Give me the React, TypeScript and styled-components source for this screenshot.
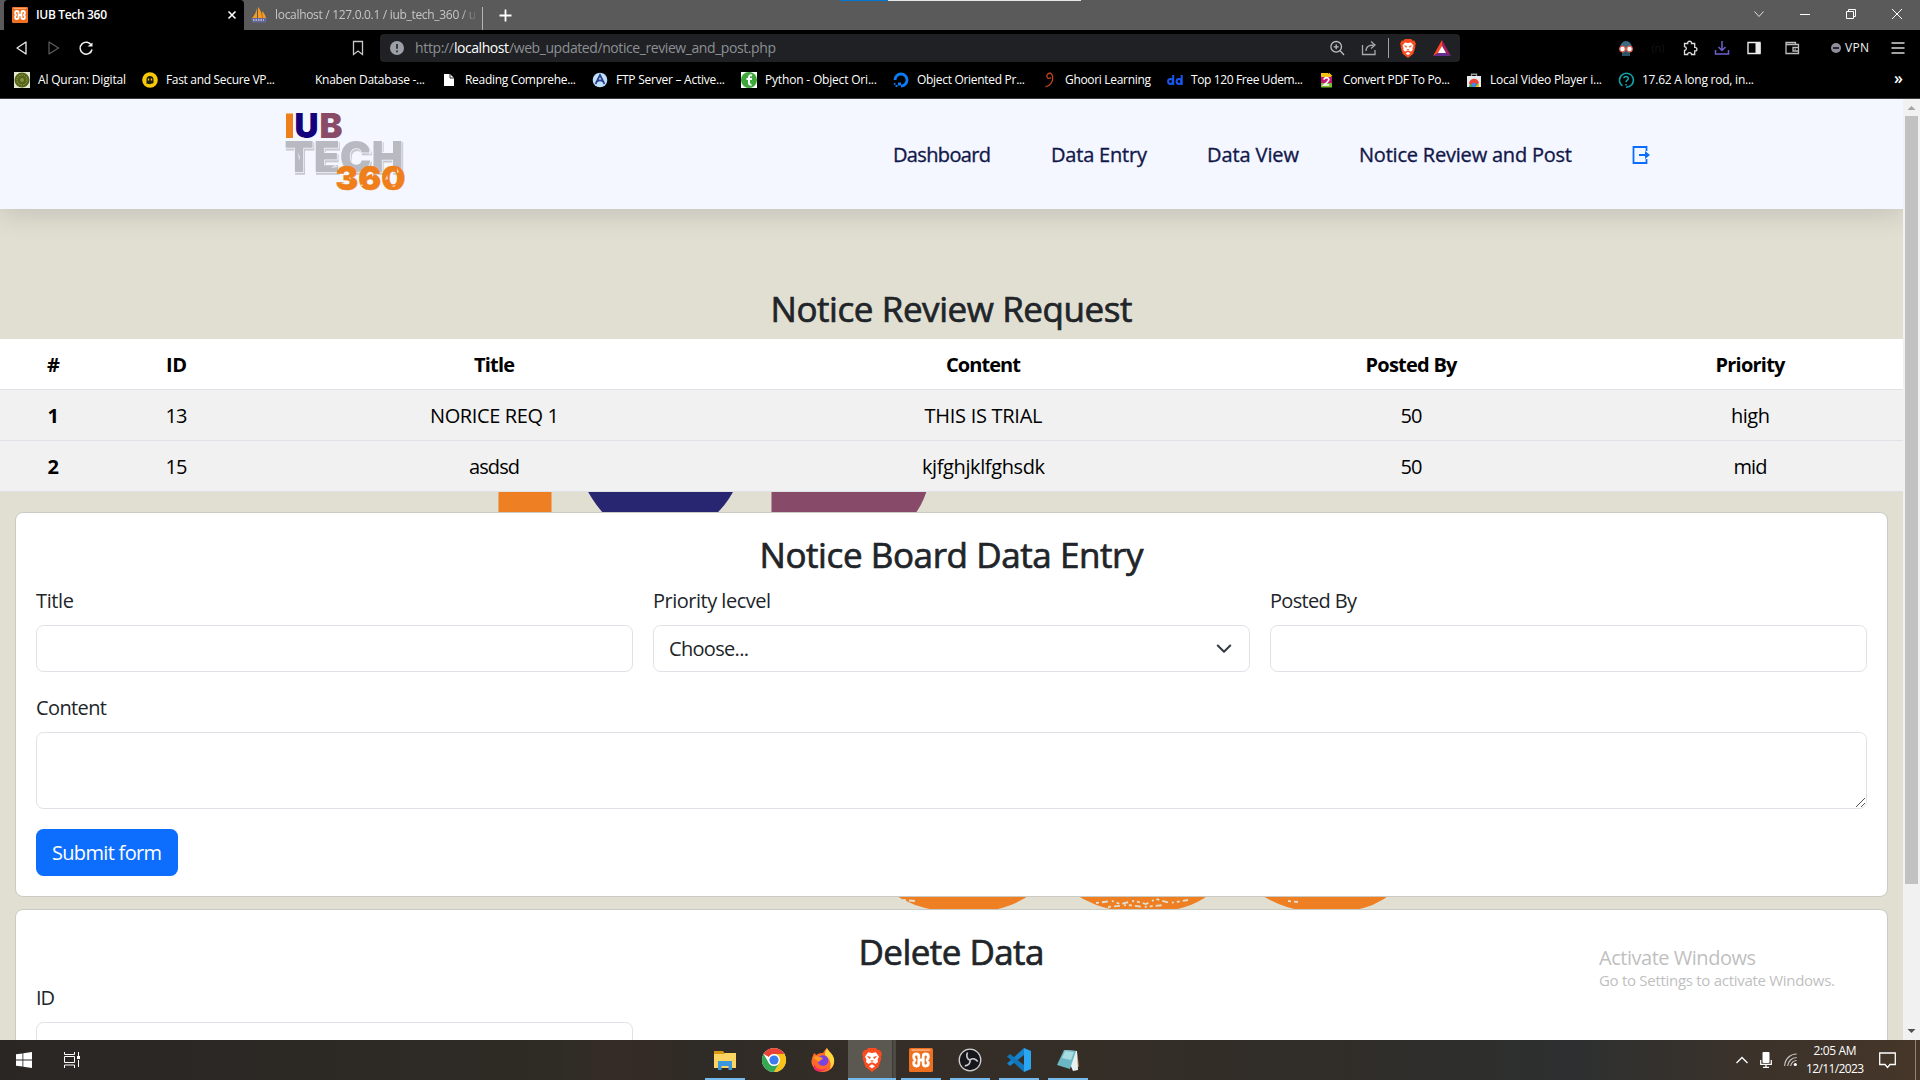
import React, { useLayoutEffect, useRef, useState } from "react";
import styled, { createGlobalStyle } from "styled-components";

const GlobalStyle = createGlobalStyle`
  *, *::before, *::after { box-sizing: border-box; }
  html, body { margin: 0; padding: 0; overflow: hidden; background: #000; }
  body { font-family: "Segoe UI", "Open Sans", "Noto Sans", sans-serif; font-size: 20px; line-height: 1.5; color: #212529; }
  svg { display: block; flex: none; overflow: visible; }
`;

/* ---------- text set to a fixed measure ---------- */

const Measure = styled.span<{ $w: number }>`
  display: inline-block;
  flex: none;
  width: ${(p) => p.$w}px;
  white-space: nowrap;
  text-align: left;
`;

function Fit({ w, children }: { w: number; children: string }) {
  const ref = useRef<HTMLSpanElement>(null);
  const [spacing, setSpacing] = useState(0);
  const text = children;
  useLayoutEffect(() => {
    if (!ref.current) return;
    const natural = ref.current.getBoundingClientRect().width - spacing * text.length;
    setSpacing((w - natural) / Math.max(1, text.length - 1));
  }, [w, text]);
  return (
    <Measure $w={w}>
      <span ref={ref} style={{ letterSpacing: `${spacing}px` }}>
        {text}
      </span>
    </Measure>
  );
}

/* ---------- shell ---------- */

const Screen = styled.div`
  width: 1920px;
  height: 1080px;
  display: flex;
  flex-direction: column;
  overflow: hidden;
  background: #000;
`;

/* ---------- browser chrome ---------- */

const TabStrip = styled.div`
  flex: none;
  height: 30px;
  padding-left: 4px;
  display: flex;
  background: #5a5a5a;
  color: #d0d0d0;
  font-size: 12px;
  line-height: 16px;
  position: relative;
`;

const LoadLine = styled.div`
  position: absolute;
  top: 0;
  left: 840px;
  width: 241px;
  height: 1px;
  background: linear-gradient(90deg, #0078d7 48px, #e6e6e6 48px);
`;

const Tab = styled.div<{ $active?: boolean }>`
  width: ${(p) => (p.$active ? 240 : 238)}px;
  height: 30px;
  padding: 0 5px 0 ${(p) => (p.$active ? 8 : 7)}px;
  display: flex;
  align-items: center;
  gap: 8px;
  border-radius: 4px 4px 0 0;
  background: ${(p) => (p.$active ? "#000" : "transparent")};
  color: ${(p) => (p.$active ? "#fff" : "#c6c6c6")};
  font-weight: ${(p) => (p.$active ? 600 : 400)};
`;

const FadingTitle = styled.div`
  width: 204px;
  overflow: hidden;
  -webkit-mask-image: linear-gradient(90deg, #000 185px, transparent 204px);
  mask-image: linear-gradient(90deg, #000 185px, transparent 204px);
`;

const TabDivider = styled.div`
  width: 1px;
  height: 23px;
  margin-top: 7px;
  background: #b4b4b4;
`;

const Spacer = styled.div`
  flex: 1;
`;

const NewTab = styled.div`
  padding: 9px 16px 0 16px;
`;

const WindowButtons = styled.div`
  display: flex;
  gap: 30px;
  padding: 10px 15px 0 0;
`;

const ToolBar = styled.div`
  flex: none;
  height: 36px;
  display: flex;
  align-items: center;
  background: #000;
`;

const NavButtons = styled.div`
  flex: none;
  width: 380px;
  display: flex;
  align-items: center;
  padding: 0 14px 0 14px;
  gap: 16px;
`;

const AddressBar = styled.div`
  flex: none;
  width: 1080px;
  height: 28px;
  border-radius: 4px;
  background: #202124;
  display: flex;
  align-items: center;
  padding: 0 4px 0 10px;
  font-size: 14px;
  line-height: 20px;
  color: #8c9095;
`;

const Info = styled.div`
  width: 25px;
`;

const Host = styled.span`
  color: #fff;
`;

const AddressActions = styled.div`
  display: flex;
  align-items: center;
  gap: 11px;
`;

const ZoomSlot = styled.div`
  margin-right: 5px;
`;

const Bar = styled.i`
  width: 1px;
  height: 20px;
  background: #a0a0a0;
`;

const Extensions = styled.div`
  flex: 1;
  display: flex;
  align-items: center;
  padding: 0 14px 0 158px;
  gap: 16px;
`;

const Faint = styled.span`
  width: 16px;
  text-align: center;
  color: #151515;
  font-size: 11px;
`;

const WalletSlot = styled.div`
  margin-left: 6px;
`;

const Vpn = styled.div`
  display: flex;
  align-items: center;
  gap: 4px;
  margin: 0 5px 0 15px;
  color: #f0f0f0;
  font-size: 12px;
  line-height: 16px;
`;

const VpnDot = styled.i`
  width: 10px;
  height: 10px;
  border-radius: 50%;
  background: linear-gradient(90deg, #8e8e9c 2px, transparent 2px, transparent 8px, #8e8e9c 8px),
    linear-gradient(#8e8e9c 4px, #26262c 4px, #26262c 6px, #8e8e9c 6px);
`;

const BookmarkBar = styled.div`
  flex: none;
  height: 33px;
  padding: 0 17px 5px 14px;
  display: flex;
  align-items: center;
  gap: 16px;
  background: #000;
  border-bottom: 1px solid #3a3a3c;
  color: #fff;
  font-size: 12px;
  line-height: 16px;
`;

const Bookmark = styled.div`
  display: flex;
  align-items: center;
  gap: 8px;
`;

const More = styled.span`
  margin-left: auto;
  font-size: 16px;
  font-weight: 600;
  line-height: 14px;
  padding-bottom: 3px;
`;

/* ---------- page ---------- */

const Viewport = styled.div`
  flex: none;
  height: 941px;
  display: flex;
`;

const Page = styled.div`
  width: 1903px;
  height: 941px;
  position: relative;
  overflow: hidden;
  background: #e1dfd2;
`;

const Backdrop = styled.svg`
  position: absolute;
  left: 0;
  top: 0;
`;

const Flow = styled.div`
  position: relative;
  display: flex;
  flex-direction: column;
`;

const Navbar = styled.nav`
  height: 110px;
  padding: 12px 253px 0 280px;
  display: flex;
  justify-content: space-between;
  background: #f4f7ff;
  box-shadow: 0 6px 26px rgba(0, 0, 0, 0.13);
`;

const Menu = styled.div`
  height: 88px;
  display: flex;
  align-items: center;
  gap: 60px;
  color: #12174a;
  -webkit-text-stroke: 0.35px #12174a;
`;

const TechWord = styled.text`
  filter: drop-shadow(1.5px 2px 0 #c6c8ce);
  paint-order: stroke;
`;

const Heading = styled.h3<{ $first?: boolean }>`
  height: 42px;
  margin: ${(p) => (p.$first ? "78px 0 10px" : "0 0 10px")};
  padding-top: 1px;
  font-size: 35px;
  line-height: 42px;
  font-weight: 400;
  -webkit-text-stroke: 0.7px #212529;
  text-align: center;
`;

const Table = styled.table`
  width: 1903px;
  border-collapse: separate;
  border-spacing: 0;
  table-layout: fixed;
  text-align: center;
  color: #000;
`;

const Column = styled.col<{ $w: number }>`
  width: ${(p) => p.$w}px;
`;

const Row = styled.tr<{ $head?: boolean }>`
  background: ${(p) => (p.$head ? "#fff" : "#f1f1f1")};

  th, td {
    height: 51px;
    padding: 11px 0 9px;
    border-bottom: 1px solid #dee2e6;
    line-height: 30px;
    vertical-align: top;
  }
`;

const Th = styled.th`
  font-weight: 700;
`;

const Td = styled.td`
  font-weight: 400;
`;

const Card = styled.section<{ $gap: number; $h: number }>`
  height: ${(p) => p.$h}px;
  margin: ${(p) => p.$gap}px 15px 0;
  padding: 20px;
  border: 1px solid #cbcbc6;
  border-radius: 8px;
  background: #fff;
`;

const Grid = styled.div`
  display: grid;
  grid-template-columns: repeat(3, 1fr);
  gap: 20px;
`;

const Field = styled.div<{ $wide?: boolean }>`
  grid-column: ${(p) => (p.$wide ? "1 / -1" : "auto")};
  display: flex;
  flex-direction: column;
  line-height: 30px;
`;

const Label = styled.label`
  height: 40px;
  padding-top: 1px;
`;

const Control = styled.div<{ $tall?: boolean }>`
  height: ${(p) => (p.$tall ? 77 : 47)}px;
  padding: 0 15px;
  display: flex;
  align-items: ${(p) => (p.$tall ? "flex-end" : "center")};
  justify-content: space-between;
  border: 1px solid #dee2e6;
  border-radius: 7.5px;
  background: #fff;
`;

const Grip = styled.svg`
  margin: 0 -16px -1px auto;
`;

const Submit = styled.button`
  width: 142px;
  height: 47px;
  padding: 1px 0 0;
  margin-top: 20px;
  border: 0;
  border-radius: 7.5px;
  background: #0d6efd;
  color: #fff;
  font: inherit;
  line-height: 30px;
  display: flex;
  align-items: center;
  justify-content: center;
`;

const Watermark = styled.div`
  position: absolute;
  left: 1599px;
  top: 845px;
  display: flex;
  flex-direction: column;
  color: #bfbfbf;
  font-size: 20px;
  line-height: 28px;
`;

const Small = styled.span`
  font-size: 15px;
  line-height: 17px;
`;

const Scrollbar = styled.div`
  width: 17px;
  height: 941px;
  display: flex;
  flex-direction: column;
  align-items: center;
  background: #f1f1f1;
`;

const Thumb = styled.div`
  width: 13px;
  height: 768px;
  margin-bottom: auto;
  background: #c1c1c1;
`;

/* ---------- taskbar ---------- */

const Taskbar = styled.footer`
  flex: none;
  height: 40px;
  display: flex;
  align-items: stretch;
  background: linear-gradient(90deg, #292624 0, #2c2925 300px, #2f2c26 560px, #362b26 620px, #2f2b26 700px, #352d27 900px, #352e27 1100px, #302d29 1350px, #2d3030 1570px, #3b322a 1750px, #463629 1920px);
`;

const Start = styled.div`
  width: 705px;
  display: flex;
  align-items: center;
  gap: 32px;
  padding-left: 16px;
`;

const Task = styled.div<{ $ml?: number; $w?: number; $active?: boolean; $open?: boolean }>`
  width: ${(p) => p.$w ?? 40}px;
  margin-left: ${(p) => p.$ml ?? 9}px;
  display: flex;
  align-items: center;
  justify-content: center;
  background: ${(p) => (p.$active ? "linear-gradient(90deg, #5b5751 44px, #3d3a35 44px, #3d3a35 45px, #4d4a45 45px)" : "transparent")};
  border-bottom: 2px solid ${(p) => (p.$open ? "#76b9ed" : "transparent")};
  padding-top: 2px;
`;

const Tray = styled.div`
  margin-left: auto;
  display: flex;
  align-items: center;
  gap: 12px;
  color: #fff;
`;

const Clock = styled.div`
  width: 60px;
  margin: 0 2px 0 -5px;
  display: flex;
  flex-direction: column;
  align-items: center;
  font-size: 12px;
  line-height: 18px;
`;

const Peek = styled.i`
  width: 1px;
  height: 40px;
  margin: 0 4px 0 7px;
  background: #8c857e;
`;

/* ---------- drawings ---------- */

const Xampp = ({ size }: { size: number }) => (
  <svg width={size} height={size} viewBox="0 0 24 24">
    <rect width="24" height="24" rx="1.500" fill="#ee6f20" />
    <rect x="2.500" y="1.200" width="19" height="1.800" fill="#f9a974" />
    <g fill="none" stroke="#fff" strokeWidth="2.800" strokeLinejoin="round" strokeLinecap="round">
      <path d="M9.800 9.500V8.300Q9.800 6 7.300 6 4.700 6 4.700 8.700q0 2 1.300 3.300-1.300 1.300-1.300 3.300 0 2.700 2.600 2.700 2.500 0 2.500-2.300V12h4.400v3.700q0 2.300 2.500 2.300 2.600 0 2.600-2.700 0-2-1.300-3.300 1.300-1.300 1.300-3.300Q19.300 6 16.700 6q-2.500 0-2.500 2.300V12" />
    </g>
  </svg>
);

const BraveLion = ({ w, h }: { w: number; h: number }) => (
  <svg width={w} height={h} viewBox="0 0 20 24">
    <path d="M6 0h8l2 2.300 2-.3 2 4-1 2.500.3 2L16.500 19 10 24l-6.500-5L.7 10.500l.3-2L0 6l2-4 2 .3z" fill="#fb4c1f" />
    <path d="M6.200 4.300l3.800.8 3.800-.8 3.200 4.200-1.400 3 .4 2.500-2.600 2-2-1.300L10 14.300l-1.400.4-2 1.300L4 14l.4-2.500L3 8.500zM7 18.300l3-2.100 3 2.100-3 2.300z" fill="#fff" />
    <path d="M5.300 8.300l3.200.9-.8 1.600zM14.700 8.300l-3.200.9.8 1.600zM8.300 12.600l1.700.9 1.700-.9" fill="#fb4c1f" stroke="#fb4c1f" strokeWidth=".5" />
  </svg>
);

const Logo = () => (
  <svg width="130" height="88" viewBox="280 111 130 88" fontFamily="Inter, sans-serif" fontWeight="900">
    <rect x="286" y="113.500" width="7" height="24.500" fill="#ee7f1b" />
    <text x="294.500" y="138.300" fontSize="34.500" textLength="24" lengthAdjust="spacingAndGlyphs" fill="#13007c">U</text>
    <text x="319.500" y="138.300" fontSize="34.500" textLength="23" lengthAdjust="spacingAndGlyphs" fill="#8a4b68">B</text>
    <TechWord x="284.500" y="172" fontSize="42" textLength="119" lengthAdjust="spacingAndGlyphs" fill="#b9bac1" stroke="#f4f7ff" strokeWidth="1.400">TECH</TechWord>
    <text x="335.500" y="189.500" fontSize="33" textLength="70" lengthAdjust="spacingAndGlyphs" fill="#ee7f1b" stroke="#ee7f1b" strokeWidth=".5">360</text>
    <g fill="#f4f7ff" opacity=".7">
      <path d="M298 152l2 5-1 4zM331 168l4-3 3 2zM369 149l2 4-2 3zM349 177l2 1-1 2zM341 184l3-2 2 2zM372 172l2 3-2 2zM385 180l2-5 1 4zM397 168l2 4-2 1zM360 186l2-2 1 2zM391 186l5-1-2 2z" />
    </g>
  </svg>
);

const Svg16 = ({ children, s = 16 }: { children?: React.ReactNode; s?: number }) => (
  <svg width={s} height={s} viewBox="0 0 16 16" fill="none">
    {children}
  </svg>
);

const BatSlot = styled.div`
  margin-left: 12px;
`;

const bookmarks: { label: string; w: number; icon: React.ReactNode }[] = [
  {
    label: "Al Quran: Digital", w: 88,
    icon: <Svg16><rect width="16" height="16" fill="#e6e9cf" /><circle cx="8" cy="8" r="7.500" fill="#53641c" /><circle cx="8" cy="8" r="5" stroke="#a3a445" strokeDasharray="1.500 1" /><circle cx="8" cy="8" r="2" fill="#8b9137" /></Svg16>,
  },
  {
    label: "Fast and Secure VP...", w: 109,
    icon: <Svg16><circle cx="8" cy="8" r="7.800" fill="#f9c908" /><path d="M4.500 12V7.500a3.500 3.500 0 017 0V11c-1.500 1-2 .2-3 1-1 .8-2.500-.8-4 0z" fill="#1d1d12" /><path d="M6.500 6.500v2M9.500 6.500v2" stroke="#f9c908" strokeWidth="1.300" /></Svg16>,
  },
  { label: "Knaben Database -...", w: 110, icon: <Svg16 /> },
  {
    label: "Reading Comprehe...", w: 111,
    icon: <Svg16><path d="M3 2h6l4 4v8H3z" fill="#fff" /><path d="M9 2v4h4" stroke="#000" strokeWidth=".8" /></Svg16>,
  },
  {
    label: "FTP Server – Active...", w: 109,
    icon: <Svg16><circle cx="8" cy="8" r="7.300" fill="#bfe0fa" /><path d="M3.500 12L8 3l4.500 9M5 9.500c2-1.500 4-1.500 6 0" stroke="#27408f" strokeWidth="1.700" /></Svg16>,
  },
  {
    label: "Python - Object Ori...", w: 112,
    icon: <Svg16><rect width="16" height="16" fill="#fff" /><circle cx="8" cy="8" r="8" fill="#3fa63c" /><path d="M11 3.500c-2-.8-3 .2-3 2V11c0 1.500 1 2 2.500 1.500M5.500 7H11" stroke="#fff" strokeWidth="2" /></Svg16>,
  },
  {
    label: "Object Oriented Pr...", w: 108,
    icon: <Svg16><path d="M8 14a6 6 0 10-6-6" stroke="#0a7cf5" strokeWidth="2.900" /><path d="M5 10.500h3v3H5zM2.500 13h2v2h-2zM.8 11h1.700v1.700H.8z" fill="#0a7cf5" /></Svg16>,
  },
  {
    label: "Ghoori Learning", w: 86,
    icon: <Svg16><path d="M9.500 1c-3 .5-4 2-3.500 4 .5 1.500 2.500 2 4 .500M9.500 1c2.500 2 3 6 1 9.500-1.500 2.500-3.500 4-6 4" stroke="#c3451f" strokeWidth="1.300" /></Svg16>,
  },
  {
    label: "Top 120 Free Udem...", w: 112,
    icon: <Svg16><g stroke="#1757f0" strokeWidth="2"><circle cx="3.500" cy="9.500" r="2.400" /><path d="M6.200 3v10M14.700 3v10" /><circle cx="12" cy="9.500" r="2.400" /></g></Svg16>,
  },
  {
    label: "Convert PDF To Po...", w: 107,
    icon: <Svg16><path d="M2 1h7l4 4v5H2z" fill="#f2c312" /><path d="M10 .5l3.500 3.500H10z" fill="#f2c312" /><path d="M2 5h11v6H2z" fill="#c41675" /><path d="M2 11h11v4.500H2z" fill="#7bb932" /><path d="M5 7.700q.4-2 2.500-2t2.400 1.800Q9.900 9 5 13h5.300" stroke="#fff" strokeWidth="1.700" /></Svg16>,
  },
  {
    label: "Local Video Player i...", w: 112,
    icon: <Svg16><path d="M5.500 4V2.200h5V4" stroke="#9a9da1" strokeWidth="1.400" /><path d="M1 4h14v11H1z" fill="#e9eaeb" /><path d="M3 15a5 5 0 0110 0z" fill="#35a853" /><path d="M3 12a5 5 0 0110-.5l-5 1z" fill="#e94435" /><path d="M13 11.500V15H9z" fill="#fbbc05" /><circle cx="8" cy="13" r="2.200" fill="#4285f4" /></Svg16>,
  },
  {
    label: "17.62 A long rod, in...", w: 112,
    icon: <Svg16><path d="M4.500 14A7 7 0 118 15.200" stroke="#12a3ab" strokeWidth="1.500" /><path d="M5.800 6.200C6 4 10.500 4 10.300 6.500 10.200 8.300 8 8 8 10.300M8 12v1.500" stroke="#12a3ab" strokeWidth="1.500" /></Svg16>,
  },
];

const columns = [106, 141, 495, 483, 373, 305];
const heads: [string, number][] = [["#", 12], ["ID", 21], ["Title", 41], ["Content", 75], ["Posted By", 92], ["Priority", 70]];
const rows: [string, number][][] = [
  [["1", 11], ["13", 22], ["NORICE REQ 1", 129], ["THIS IS TRIAL", 118], ["50", 22], ["high", 39]],
  [["2", 11], ["15", 22], ["asdsd", 51], ["kjfghjklfghsdk", 123], ["50", 22], ["mid", 34]],
];

const menu: [string, number][] = [["Dashboard", 98], ["Data Entry", 96], ["Data View", 92], ["Notice Review and Post", 213]];

export default function App() {
  return (
    <Screen>
      <GlobalStyle />
      <TabStrip>
        <LoadLine />
        <Tab $active>
          <Xampp size={16} />
          <Fit w={71}>IUB Tech 360</Fit>
          <Spacer />
          <svg width="14" height="10" viewBox="0 0 14 10"><path d="M3.500 1.500l7 7M10.500 1.500l-7 7" stroke="#fff" strokeWidth="1.600" /></svg>
        </Tab>
        <Tab>
          <svg width="16" height="16" viewBox="0 0 16 16">
            <path d="M6 1v10H1c2-2 4-5 5-10zM7 0c3 3 4 7 4 11H7zM11 4c2 2 3.500 4 4 7h-3.500z" fill="#f59a22" />
            <path d="M0 11h16l-1.500 4.500h-13z" fill="#66689c" /><path d="M2 13h11" stroke="#c4c5dd" strokeWidth="1.500" strokeDasharray="1.500 1" />
          </svg>
          <FadingTitle><Fit w={201}>localhost / 127.0.0.1 / iub_tech_360 / u</Fit></FadingTitle>
        </Tab>
        <TabDivider />
        <NewTab>
          <svg width="13" height="13" viewBox="0 0 13 13"><path d="M6.500.5v12M.5 6.500h12" stroke="#fff" strokeWidth="1.800" /></svg>
        </NewTab>
        <Spacer />
        <WindowButtons>
          <Svg16><path d="M3.500 1.500l4.500 5 4.500-5" stroke="#e0e0e0" /></Svg16>
          <Svg16><path d="M3 4.500h10" stroke="#fff" /></Svg16>
          <Svg16><path d="M3.500 1.500h7v7h-7zM5.500 1.500v-2h7v7h-2" stroke="#fff" /></Svg16>
          <Svg16><path d="M3 -1l10 10M13 -1L3 9" stroke="#fff" /></Svg16>
        </WindowButtons>
      </TabStrip>

      <ToolBar>
        <NavButtons>
          <Svg16><path d="M12 2v12L3 8z" stroke="#ececec" strokeWidth="1.300" strokeLinejoin="round" /></Svg16>
          <Svg16><path d="M3 2v12L12.500 8z" stroke="#5e5e5e" strokeWidth="1.200" strokeLinejoin="round" /></Svg16>
          <Svg16><path d="M13.500 5.500a6 6 0 10.500 4" stroke="#f1f1f1" strokeWidth="1.500" /><path d="M9.500 6.500h5v-4z" fill="#f1f1f1" /></Svg16>
          <Spacer />
          <Svg16><path d="M3.500 1.500h9v13L8 11l-4.500 3.500z" stroke="#c8c8c8" strokeWidth="1.300" /></Svg16>
        </NavButtons>
        <AddressBar>
          <Info>
            <svg width="14" height="14" viewBox="0 0 14 14"><circle cx="7" cy="7" r="7" fill="#9aa0a6" /><path d="M7 3v4.800M7 9.500v1.700" stroke="#202124" strokeWidth="1.600" /></svg>
          </Info>
          <Fit w={39}>http://</Fit>
          <Host><Fit w={55}>localhost</Fit></Host>
          <Fit w={267}>/web_updated/notice_review_and_post.php</Fit>
          <Spacer />
          <AddressActions>
            <ZoomSlot>
              <Svg16><circle cx="7.200" cy="6.800" r="5.300" stroke="#bdbdbd" strokeWidth="1.300" /><path d="M11.200 10.800L15 15M4.700 6.800h5M7.200 4.300v5" stroke="#bdbdbd" strokeWidth="1.300" /></Svg16>
            </ZoomSlot>
            <Svg16><path d="M1.500 5v9.500H14V10M5 11c0-4 3-6 7.500-6M10 1.500L14 5l-4 3.500" stroke="#a8a8a8" strokeWidth="1.300" /></Svg16>
            <Bar />
            <BraveLion w={16} h={19} />
          </AddressActions>
          <BatSlot>
            <svg width="28" height="18" viewBox="0 0 28 18">
              <path d="M14 1L5 17l9-5z" fill="#ff4724" /><path d="M14 1l9 16-9-5z" fill="#9e1f63" /><path d="M5 17h18l-9-5z" fill="#662d91" /><path d="M14 7l4 7h-8z" fill="#fff" />
            </svg>
          </BatSlot>
        </AddressBar>
        <Extensions>
          <Svg16><path d="M2 8a6 7 0 0112 0v3H2z" fill="#3a6b80" /><path d="M4 10h8v6H4z" fill="#2c5365" /><circle cx="4.500" cy="9" r="2.800" fill="#fff" stroke="#e0604a" strokeWidth="1.200" /><circle cx="11.500" cy="9" r="2.800" fill="#fff" stroke="#e0604a" strokeWidth="1.200" /></Svg16>
          <Faint>(n)</Faint>
          <Svg16><path d="M2.500 3.500h3.200c-.5-3 4.300-3 3.800 0h3.200v3.800c3 0 3 3.700 0 3.700v3.500H9.600c0-2.500-4-2.500-4 0H2.500v-4c2.500-.5 2.500-3.500 0-4z" stroke="#dedede" strokeWidth="1.300" /></Svg16>
          <Svg16><path d="M8 1v9M4.500 7L8 10.500 11.500 7M1.500 10v4h13v-4" stroke="#6a61c9" strokeWidth="1.500" /></Svg16>
          <Svg16><path d="M2 2.500h12v11H2z" stroke="#ececec" strokeWidth="1.400" /><path d="M9.500 3h5v10.500h-5z" fill="#ececec" /></Svg16>
          <WalletSlot>
            <Svg16><path d="M2 13.500V2.500h9.500v2M2 4.500h12.500v9H2zM14.500 7.500H9v3.500h5.500" stroke="#bdbdbd" strokeWidth="1.300" /><path d="M10.500 9.200h1.500" stroke="#bdbdbd" /></Svg16>
          </WalletSlot>
          <Vpn><VpnDot /><Fit w={24}>VPN</Fit></Vpn>
          <Svg16><path d="M1.500 3h13M1.500 8h13M1.500 13h13" stroke="#d8d8d8" strokeWidth="1.300" /></Svg16>
        </Extensions>
      </ToolBar>

      <BookmarkBar>
        {bookmarks.map((b) => (
          <Bookmark key={b.label}>
            {b.icon}
            <Fit w={b.w}>{b.label}</Fit>
          </Bookmark>
        ))}
        <More>»</More>
      </BookmarkBar>

      <Viewport>
        <Page>
          <Backdrop width="1903" height="941" viewBox="0 99 1903 941">
            <rect x="498.500" y="480" width="53" height="34" fill="#ee7f22" />
            <path d="M585 486Q593 502 604 514h112Q728 503 736 486z" fill="#282571" />
            <path d="M771.500 486H928Q924 502 915 514H771.500z" fill="#884a69" />
            <path d="M892 893Q912 907 940 911h46Q1015 907 1032 893z" fill="#ee7f22" />
            <path d="M1073 893Q1094 907 1120 911h46Q1195 907 1211 893z" fill="#ee7f22" />
            <path d="M1258 893Q1279 907 1304 911h46Q1376 907 1392 893z" fill="#ee7f22" />
            <path d="M1096 903l16-2 8 3 14-3 12 3 10-5 14 4 18-3M1108 907l20-2 16 2 20-2M903 900l12 1M1288 901l10 1" stroke="#e1dfd2" strokeWidth="1.800" strokeDasharray="3 3 6 4 2 3" fill="none" />
          </Backdrop>
          <Flow>
            <Navbar>
              <Logo />
              <Menu>
                {menu.map(([t, w]) => <Fit key={t} w={w}>{t}</Fit>)}
                <svg width="18" height="18" viewBox="0 0 18 18"><path d="M14.500 5V1H1.500v16h13v-4M7 9h8" stroke="#0d6efd" strokeWidth="1.800" fill="none" /><path d="M13 5l5 4-5 4z" fill="#0d6efd" /></svg>
              </Menu>
            </Navbar>
            <Heading $first><Fit w={362}>Notice Review Request</Fit></Heading>
            <Table>
              <colgroup>{columns.map((w, i) => <Column key={i} $w={w} />)}</colgroup>
              <thead>
                <Row $head>{heads.map(([t, w]) => <Th key={t}><Fit w={w}>{t}</Fit></Th>)}</Row>
              </thead>
              <tbody>
                {rows.map((r, i) => (
                  <Row key={i}>
                    {r.map(([t, w], j) => j === 0 ? <Th key={j}><Fit w={w}>{t}</Fit></Th> : <Td key={j}><Fit w={w}>{t}</Fit></Td>)}
                  </Row>
                ))}
              </tbody>
            </Table>
            <Card $gap={20} $h={385}>
              <Heading><Fit w={384}>Notice Board Data Entry</Fit></Heading>
              <Grid>
                <Field><Label><Fit w={38}>Title</Fit></Label><Control /></Field>
                <Field>
                  <Label><Fit w={118}>Priority lecvel</Fit></Label>
                  <Control>
                    <Fit w={80}>Choose...</Fit>
                    <svg width="20" height="20" viewBox="0 0 16 16"><path d="M3 5.200l5 5 5-5" fill="none" stroke="#343a40" strokeWidth="1.600" strokeLinecap="round" strokeLinejoin="round" /></svg>
                  </Control>
                </Field>
                <Field><Label><Fit w={87}>Posted By</Fit></Label><Control /></Field>
                <Field $wide>
                  <Label><Fit w={71}>Content</Fit></Label>
                  <Control $tall>
                    <Grip width="13" height="13" viewBox="0 0 13 13"><path d="M2 11l9-9M7 11l4-4" stroke="#555" fill="none" /></Grip>
                  </Control>
                </Field>
              </Grid>
              <Submit><Fit w={110}>Submit form</Fit></Submit>
            </Card>
            <Card $gap={12} $h={300}>
              <Heading><Fit w={186}>Delete Data</Fit></Heading>
              <Grid>
                <Field><Label><Fit w={19}>ID</Fit></Label><Control /></Field>
              </Grid>
            </Card>
          </Flow>
          <Watermark>
            <Fit w={157}>Activate Windows</Fit>
            <Small><Fit w={236}>Go to Settings to activate Windows.</Fit></Small>
          </Watermark>
        </Page>
        <Scrollbar>
          <svg width="17" height="17" viewBox="0 0 17 17"><path d="M8.500 7L12.500 11h-8z" fill="#a3a3a3" /></svg>
          <Thumb />
          <svg width="17" height="17" viewBox="0 0 17 17"><path d="M4.500 6h8l-4 4z" fill="#505050" /></svg>
        </Scrollbar>
      </Viewport>

      <Taskbar>
        <Start>
          <svg width="16" height="16" viewBox="0 0 16 16"><path d="M0 2.300L6.500 1.400v6.200H0zM7.300 1.300L16 0v7.600H7.300zM0 8.400h6.500v6.200L0 13.700zM7.300 8.400H16V16l-8.700-1.300z" fill="#fff" /></svg>
          <svg width="17" height="16" viewBox="0 0 17 16" fill="none" stroke="#fff"><path d="M.5 0v2.500h10V0M.5 4.500h10v6H.5zM.5 16v-3h10v3M14.500 0v4M14.500 8v7" /><path d="M13 5.500h3" strokeWidth="3" /></svg>
        </Start>
        <Task $ml={0} $open>
          <svg width="22" height="19" viewBox="0 0 22 19"><path d="M0 0h9l1.500 2H21v3H0z" fill="#d99a10" /><path d="M0 3h10l1-1h11v15H0z" fill="#fcd462" /><path d="M4 19v-9h14v9h-3.500v-4h-7v4z" fill="#3a96dd" /></svg>
        </Task>
        <Task>
          <svg width="24" height="24" viewBox="0 0 24 24">
            <circle cx="12" cy="12" r="12" fill="#fff" />
            <path d="M1.600 6A12 12 0 0122.400 6H12a6 6 0 00-5.200 3z" fill="#ea4335" /><path d="M22.400 6A12 12 0 0112 24l5.200-9A6 6 0 0012 6z" fill="#fbc116" /><path d="M1.600 6A12 12 0 0012 24l5.200-9A6 6 0 016.800 15z" fill="#34a853" />
            <circle cx="12" cy="12" r="5.800" fill="#fff" /><circle cx="12" cy="12" r="4.600" fill="#3b7ded" />
          </svg>
        </Task>
        <Task>
          <svg width="24" height="24" viewBox="0 0 24 24">
            <path d="M3 5l2.500 2C8 5 10 5 12 5c1-2 2.500-4 4-5 1 3 6 6 7 11 1.500 7-4 13-11 13S0 18 .5 13C1 9 2 8 3 5z" fill="#ff6a2b" />
            <path d="M16 0c1 3 6 6 7 11 .5 4-1 8-4 10 2-6 0-10-5-14-.5-2 1-5 2-7z" fill="#ffd83d" /><path d="M3 15c1 6 8 8 13 5-3 4-9 5-13 1z" fill="#f52c65" />
            <circle cx="12" cy="12.500" r="5.300" fill="#7a42e0" /><path d="M2 9c4-2 7 0 10 1-1 2-3 2-4 4-2-1-4-3-6-5z" fill="#ff9a25" />
          </svg>
        </Task>
        <Task $ml={5} $w={48} $active $open><BraveLion w={20} h={24} /></Task>
        <Task $ml={5} $open><Xampp size={24} /></Task>
        <Task $open>
          <svg width="24" height="24" viewBox="0 0 24 24">
            <circle cx="12" cy="12" r="10.800" fill="#17161a" stroke="#d0d0d2" strokeWidth="1.300" />
            <g fill="none" stroke="#c8c8ca" strokeWidth="1.700"><path d="M12 12c-3-1-4-4-2.500-7.500" /><path d="M12 12c-3-1-4-4-2.500-7.500" transform="rotate(120 12 12)" /><path d="M12 12c-3-1-4-4-2.500-7.500" transform="rotate(240 12 12)" /></g>
          </svg>
        </Task>
        <Task $open>
          <svg width="24" height="24" viewBox="0 0 24 24"><path d="M17 0l7 3v18l-7 3z" fill="#2aa6f2" /><path d="M17 0v7L3 18l-3-2.500z" fill="#1683cd" /><path d="M0 8.500L3 6l14 11v7z" fill="#1276bd" /></svg>
        </Task>
        <Task $open>
          <svg width="23" height="23" viewBox="0 0 23 23"><path d="M20 3l2 14-3 4z" fill="#a8823a" /><path d="M7 1l13 1 1 19-5 1z" fill="#e7eff1" /><path d="M7 1l12 1-6 18L0 16z" fill="#6bb7c4" /><path d="M8 2l9 1-3 8-9-2z" fill="#a9dbe2" /></svg>
        </Task>
        <Tray>
          <svg width="12" height="8" viewBox="0 0 12 8" fill="none"><path d="M.5 7L6 1.500 11.500 7" stroke="#fff" strokeWidth="1.300" /></svg>
          <svg width="12" height="16" viewBox="0 0 12 16" fill="none"><rect x="2.500" width="7" height="11" rx="1" fill="#fff" /><path d="M.7 8v4.300h10.600V8M6 12v3M3 15.300h6" stroke="#fff" strokeWidth="1.200" /></svg>
          <svg width="14" height="14" viewBox="0 0 14 14" fill="none" stroke="#c9c6c2" strokeWidth="1.200"><path d="M.7 13A12 12 0 0112.700 1M3.700 13a9 9 0 019-8.500M6.700 13a6 6 0 016-5.500" /><circle cx="11.300" cy="11.500" r="1.600" fill="#fff" stroke="none" /></svg>
          <Clock><Fit w={43}>2:05 AM</Fit><Fit w={58}>12/11/2023</Fit></Clock>
          <svg width="17" height="17" viewBox="0 0 17 17" fill="none"><path d="M.7 1h15.600v11.500H11L8.500 15.500 6 12.500H.7z" stroke="#fff" strokeWidth="1.300" /></svg>
          <Peek />
        </Tray>
      </Taskbar>
    </Screen>
  );
}
